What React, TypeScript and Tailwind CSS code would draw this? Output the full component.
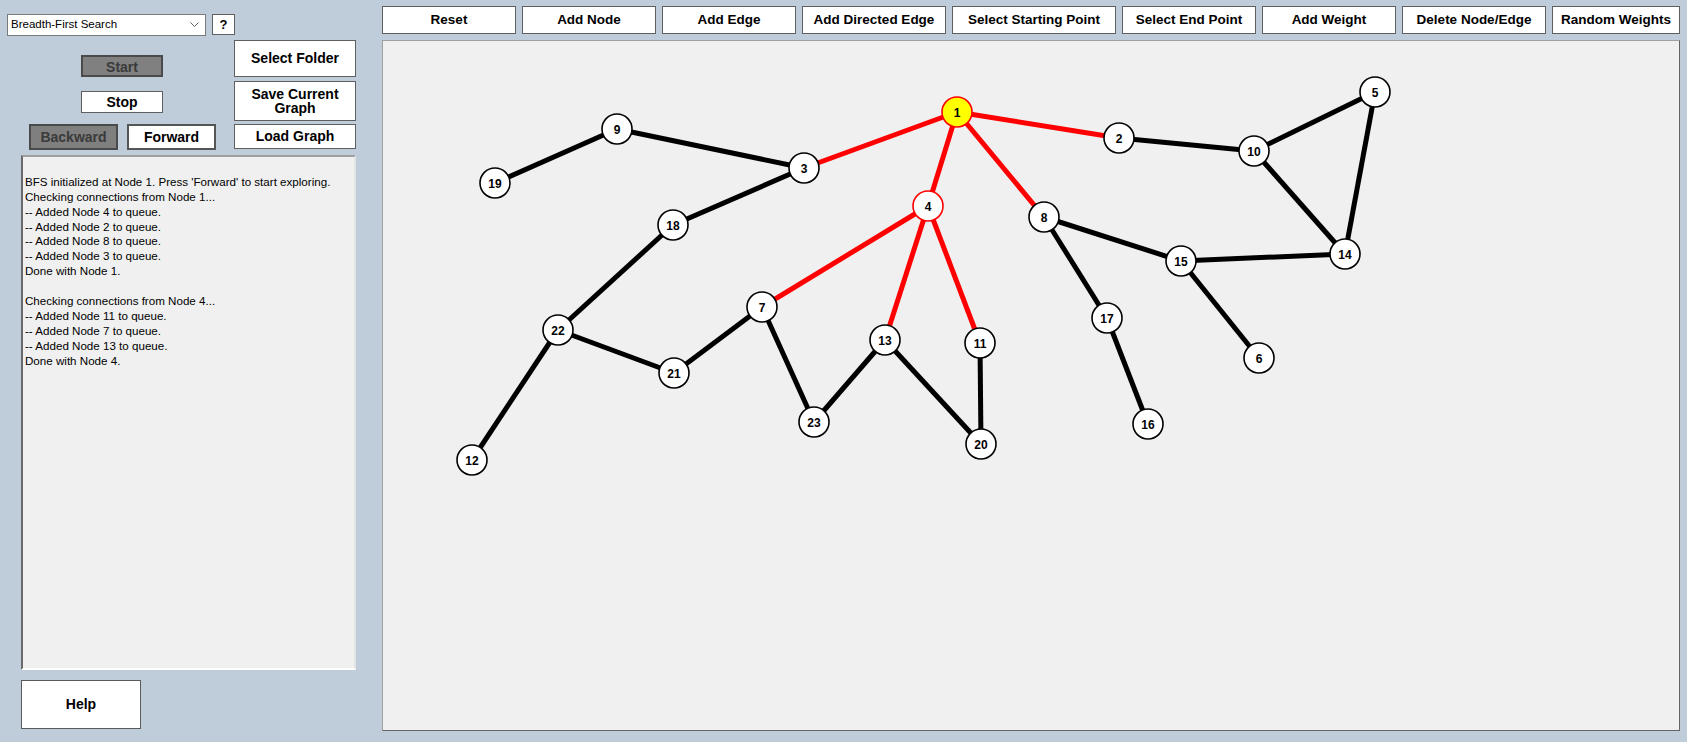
import React from "react";

type Node = { id: number; x: number; y: number };

const NODES: Node[] = [
  { id: 1, x: 957, y: 112 },
  { id: 2, x: 1119, y: 138 },
  { id: 3, x: 804, y: 168 },
  { id: 4, x: 928, y: 206 },
  { id: 5, x: 1375, y: 92 },
  { id: 6, x: 1259, y: 358 },
  { id: 7, x: 762, y: 307 },
  { id: 8, x: 1044, y: 217 },
  { id: 9, x: 617, y: 129 },
  { id: 10, x: 1254, y: 151 },
  { id: 11, x: 980, y: 343 },
  { id: 12, x: 472, y: 460 },
  { id: 13, x: 885, y: 340 },
  { id: 14, x: 1345, y: 254 },
  { id: 15, x: 1181, y: 261 },
  { id: 16, x: 1148, y: 424 },
  { id: 17, x: 1107, y: 318 },
  { id: 18, x: 673, y: 225 },
  { id: 19, x: 495, y: 183 },
  { id: 20, x: 981, y: 444 },
  { id: 21, x: 674, y: 373 },
  { id: 22, x: 558, y: 330 },
  { id: 23, x: 814, y: 422 },
];

// [from, to, visited]
const EDGES: [number, number, boolean][] = [
  [9, 19, false],
  [9, 3, false],
  [3, 18, false],
  [18, 22, false],
  [22, 21, false],
  [22, 12, false],
  [21, 7, false],
  [7, 23, false],
  [23, 13, false],
  [13, 20, false],
  [11, 20, false],
  [2, 10, false],
  [10, 5, false],
  [5, 14, false],
  [10, 14, false],
  [8, 15, false],
  [15, 14, false],
  [8, 17, false],
  [17, 16, false],
  [15, 6, false],
  [1, 3, true],
  [1, 2, true],
  [1, 4, true],
  [1, 8, true],
  [4, 7, true],
  [4, 13, true],
  [4, 11, true],
];

const LOG = [
  "",
  "BFS initialized at Node 1. Press 'Forward' to start exploring.",
  "Checking connections from Node 1...",
  "-- Added Node 4 to queue.",
  "-- Added Node 2 to queue.",
  "-- Added Node 8 to queue.",
  "-- Added Node 3 to queue.",
  "Done with Node 1.",
  "",
  "Checking connections from Node 4...",
  "-- Added Node 11 to queue.",
  "-- Added Node 7 to queue.",
  "-- Added Node 13 to queue.",
  "Done with Node 4.",
];

const byId = (id: number) => NODES.find((n) => n.id === id)!;

function TopButton({ label, w }: { label: string; w: string }) {
  return (
    <button
      className={`${w} h-[28px] shrink-0 border border-[#5f5f5f] bg-white text-[13.5px] font-bold text-black`}
    >
      {label}
    </button>
  );
}

function GraphCanvas() {
  return (
    <svg width={1296} height={689} viewBox="383 41 1296 689" className="block">
      {EDGES.map(([a, b, hit], i) => {
        const p = byId(a);
        const q = byId(b);
        return (
          <line
            key={i}
            x1={p.x}
            y1={p.y}
            x2={q.x}
            y2={q.y}
            stroke={hit ? "#ff0000" : "#000000"}
            strokeWidth={5}
          />
        );
      })}
      {NODES.map((n) => {
        const start = n.id === 1;
        const queued = n.id === 4;
        return (
          <g key={n.id}>
            <circle
              cx={n.x}
              cy={n.y}
              r={15}
              fill={start ? "#ffff00" : "#ffffff"}
              stroke={start || queued ? "#ff0000" : "#000000"}
              strokeWidth={1.6}
            />
            <text
              x={n.x}
              y={n.y + 0.5}
              textAnchor="middle"
              dominantBaseline="central"
              fontFamily="'Liberation Sans', Arial, sans-serif"
              fontWeight="bold"
              fontSize={12}
              fill="#000"
            >
              {n.id}
            </text>
          </g>
        );
      })}
    </svg>
  );
}

export default function App() {
  return (
    <div
      className="flex h-[742px] w-[1687px] overflow-hidden bg-[#bfcddb] text-black"
      style={{ fontFamily: "'Liberation Sans', Arial, sans-serif" }}
    >
      {/* Control panel */}
      <div className="flex w-[382px] shrink-0 flex-col pl-[7px] pt-[14px]">
        <div className="flex items-start gap-[6px]">
          <div className="flex h-[22px] w-[199px] items-center justify-between border border-[#7a7a7a] bg-white pl-[3px] pr-[6px] text-[11.5px]">
            <span>Breadth-First Search</span>
            <svg width="9" height="6" viewBox="0 0 9 6">
              <polyline points="0.5,0.5 4.5,4.5 8.5,0.5" fill="none" stroke="#606060" strokeWidth="1" />
            </svg>
          </div>
          <button className="h-[21px] w-[23px] border border-[#5f5f5f] bg-white text-[13px] font-bold leading-none">
            ?
          </button>
        </div>

        <div className="mt-[4px] flex">
          <div className="flex w-[227px] flex-col pt-[15px]">
            <button className="ml-[74px] h-[22px] w-[82px] border-2 border-[#4a4a4a] bg-[#808080] text-[14px] font-bold text-[#3a3a3a]">
              Start
            </button>
            <button className="ml-[74px] mt-[14px] h-[22px] w-[82px] border border-[#5f5f5f] bg-white text-[14px] font-bold">
              Stop
            </button>
            <div className="ml-[22px] mt-[11px] flex gap-[9px]">
              <button className="h-[26px] w-[89px] border-2 border-[#4a4a4a] bg-[#7f7f7f] text-[14px] font-bold text-[#3a3a3a]">
                Backward
              </button>
              <button className="h-[26px] w-[89px] border-2 border-[#555555] bg-white text-[14px] font-bold">
                Forward
              </button>
            </div>
          </div>
          <div className="flex w-[122px] flex-col">
            <button className="h-[37px] border border-[#5f5f5f] bg-white text-[14px] font-bold">
              Select Folder
            </button>
            <button className="mt-[4px] h-[40px] border border-[#5f5f5f] bg-white text-[14px] font-bold leading-[14px]">
              Save Current
              <br />
              Graph
            </button>
            <button className="mt-[3px] h-[25px] border border-[#5f5f5f] bg-white text-[14px] font-bold">
              Load Graph
            </button>
          </div>
        </div>

        <div className="ml-[14px] mt-[5px] h-[515px] w-[335px] border-b-2 border-l-2 border-r-2 border-t-2 border-b-white border-l-[#696969] border-r-[#e3e3e3] border-t-[#a0a0a0] bg-[#f0f0f0] pl-[2px] pt-[3px] text-[11.6px] leading-[14.9px]">
          {LOG.map((line, i) => (
            <div key={i} className="h-[14.9px] whitespace-pre">
              {line}
            </div>
          ))}
        </div>

        <button className="ml-[14px] mt-[10px] h-[49px] w-[120px] border border-[#5a5a5a] bg-white text-[14px] font-bold">
          Help
        </button>
      </div>

      {/* Toolbar and drawing area */}
      <div className="flex flex-col pt-[6px]">
        <div className="flex gap-[6px]">
          <TopButton label="Reset" w="w-[134px]" />
          <TopButton label="Add Node" w="w-[134px]" />
          <TopButton label="Add Edge" w="w-[134px]" />
          <TopButton label="Add Directed Edge" w="w-[144px]" />
          <TopButton label="Select Starting Point" w="w-[164px]" />
          <TopButton label="Select End Point" w="w-[134px]" />
          <TopButton label="Add Weight" w="w-[134px]" />
          <TopButton label="Delete Node/Edge" w="w-[144px]" />
          <TopButton label="Random Weights" w="w-[128px]" />
        </div>
        <div className="mt-[6px] h-[691px] w-[1298px] border border-b-[#646464] border-l-[#a0a0a0] border-r-[#646464] border-t-[#a0a0a0] bg-[#f0f0f0]">
          <GraphCanvas />
        </div>
      </div>
    </div>
  );
}
